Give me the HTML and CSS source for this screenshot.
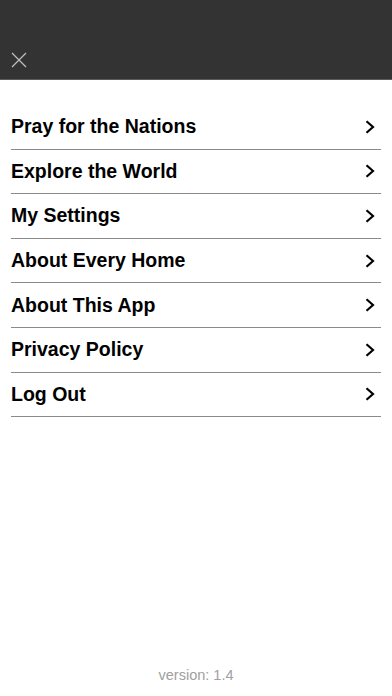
FILE: index.html
```
<!DOCTYPE html>
<html>
<head>
<meta charset="utf-8">
<link rel="stylesheet" href="styles.css">
</head>
<body>
<div class="app">
  <header class="header">
    <button class="close" aria-label="Close">
      <svg width="16" height="16" viewBox="0 0 16 16"><path d="M1 1L15 15M15 1L1 15" stroke="#bdbdbd" stroke-width="1.3" fill="none"/></svg>
    </button>
  </header>
  <nav class="menu">
    <a class="item"><span>Pray for the Nations</span><svg class="chev" width="10" height="14" viewBox="0 0 10 14"><path d="M1.5 1.2L8 7L1.5 12.8" stroke="#000" stroke-width="2.2" fill="none"/></svg></a>
    <a class="item"><span>Explore the World</span><svg class="chev" width="10" height="14" viewBox="0 0 10 14"><path d="M1.5 1.2L8 7L1.5 12.8" stroke="#000" stroke-width="2.2" fill="none"/></svg></a>
    <a class="item"><span>My Settings</span><svg class="chev" width="10" height="14" viewBox="0 0 10 14"><path d="M1.5 1.2L8 7L1.5 12.8" stroke="#000" stroke-width="2.2" fill="none"/></svg></a>
    <a class="item"><span>About Every Home</span><svg class="chev" width="10" height="14" viewBox="0 0 10 14"><path d="M1.5 1.2L8 7L1.5 12.8" stroke="#000" stroke-width="2.2" fill="none"/></svg></a>
    <a class="item"><span>About This App</span><svg class="chev" width="10" height="14" viewBox="0 0 10 14"><path d="M1.5 1.2L8 7L1.5 12.8" stroke="#000" stroke-width="2.2" fill="none"/></svg></a>
    <a class="item"><span>Privacy Policy</span><svg class="chev" width="10" height="14" viewBox="0 0 10 14"><path d="M1.5 1.2L8 7L1.5 12.8" stroke="#000" stroke-width="2.2" fill="none"/></svg></a>
    <a class="item"><span>Log Out</span><svg class="chev" width="10" height="14" viewBox="0 0 10 14"><path d="M1.5 1.2L8 7L1.5 12.8" stroke="#000" stroke-width="2.2" fill="none"/></svg></a>
  </nav>
  <div class="version">version: 1.4</div>
</div>
</body>
</html>
```
FILE: styles.css
```
html, body {
  margin: 0;
  padding: 0;
  background: #fff;
}
body {
  font-family: "Liberation Sans", Arial, sans-serif;
}
.app {
  width: 392px;
  height: 696px;
  display: flex;
  flex-direction: column;
}
.header {
  height: 80px;
  flex: none;
  background: #333333;
  border-bottom: 1px solid #5a5a5a;
  box-sizing: border-box;
  display: flex;
  align-items: flex-end;
  padding: 0 0 11px 11px;
}
.close {
  background: none;
  border: 0;
  padding: 0;
  width: 16px;
  height: 16px;
  display: flex;
}
.menu {
  margin: 25px 11px 0 11px;
  display: flex;
  flex-direction: column;
}
.item {
  box-sizing: border-box;
  height: 44.6px;
  border-bottom: 1px solid #8a8a8a;
  display: flex;
  align-items: center;
  justify-content: space-between;
  font-size: 19.5px;
  font-weight: bold;
  color: #000;
  padding: 0 6px 0 0;
}
.chev {
  display: block;
}
.version {
  margin-top: auto;
  text-align: center;
  color: #a0a0a0;
  font-size: 14.5px;
  padding-bottom: 13px;
}
```
